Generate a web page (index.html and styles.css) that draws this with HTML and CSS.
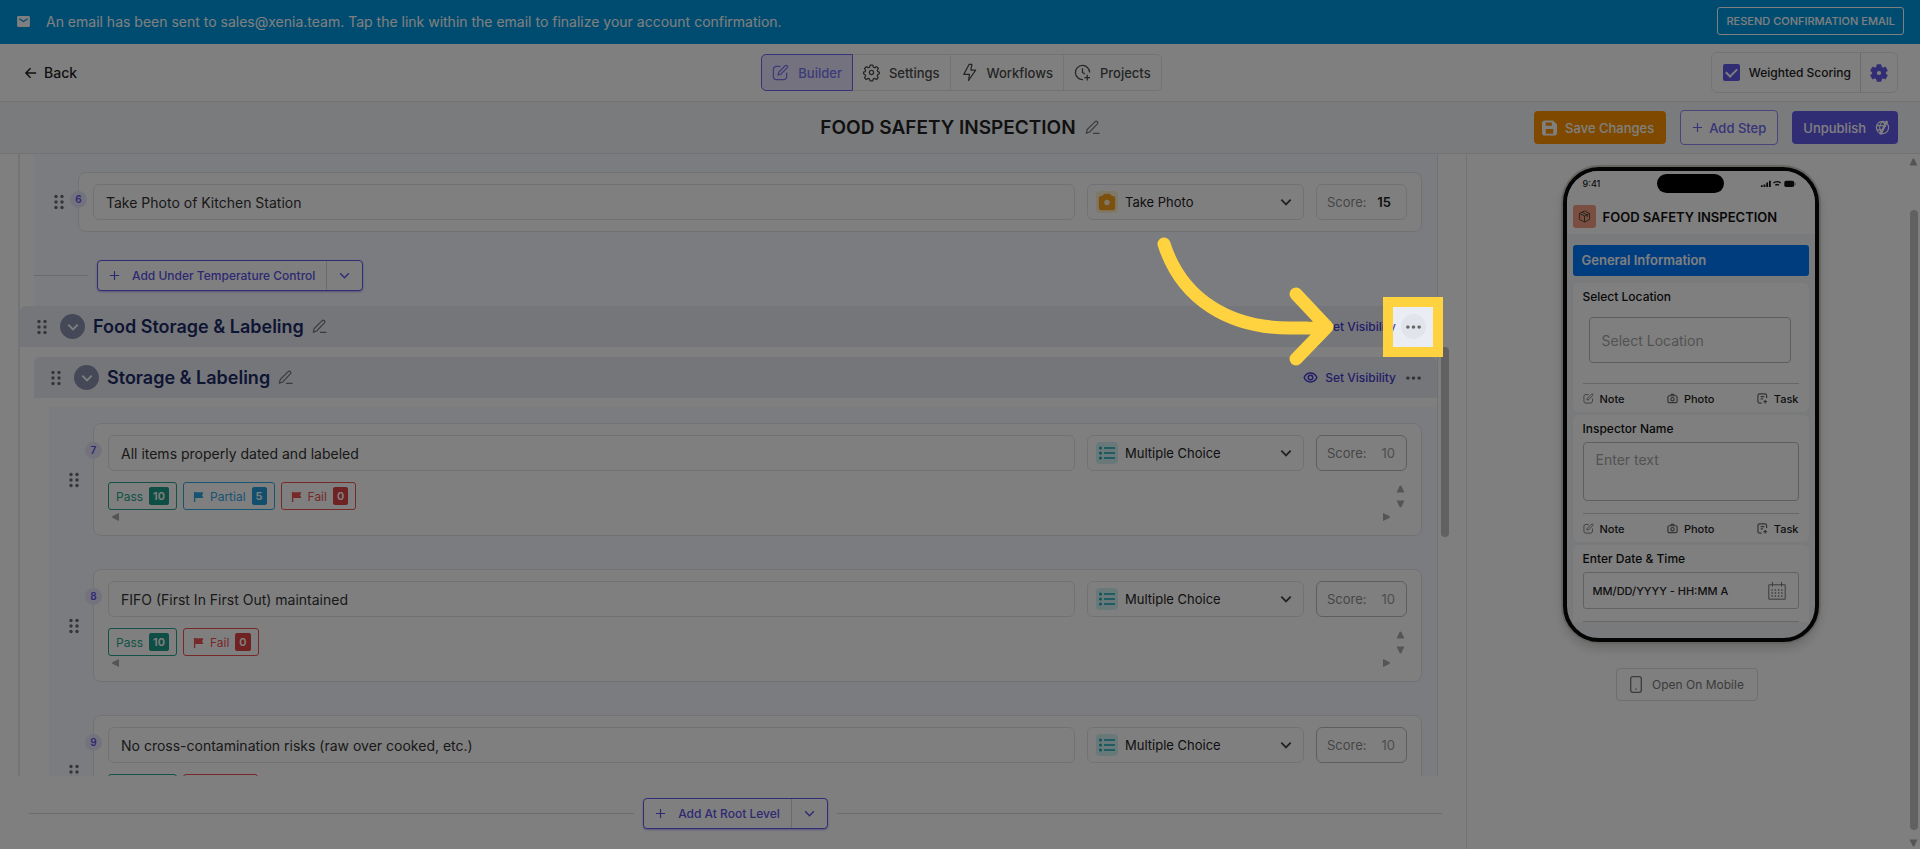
FILE: index.html
```html
<!DOCTYPE html>
<html lang="en">
<head>
<meta charset="utf-8">
<title>Food Safety Inspection</title>
<link rel="stylesheet" href="styles.css">
</head>
<body>
<svg class="defs" aria-hidden="true">
  <symbol id="pen" viewBox="0 0 16 16"><path d="M1.500 14l.8-3.800L10.800 1.800a1.700 1.700 0 0 1 2.400 2.400L5 12.800zM8.500 14.200h7" /></symbol>
  <symbol id="compose" viewBox="0 0 18 18"><path d="M9 2.500H4.500a3 3 0 0 0-3 3v8a3 3 0 0 0 3 3h8a3 3 0 0 0 3-3V9M6.500 11.500l.6-2.800 6.700-6.800a1.500 1.500 0 0 1 2.200 2.200L9.300 10.900z"/></symbol>
  <symbol id="chev" viewBox="0 0 12 12"><path d="M2 4l4 4 4-4"/></symbol>
  <symbol id="plus" viewBox="0 0 12 12"><path d="M6 1v10M1 6h10"/></symbol>
  <symbol id="grip" viewBox="0 0 10 16"><g fill="currentColor" stroke="none"><circle cx="2" cy="2.500" r="1.700"/><circle cx="8" cy="2.500" r="1.700"/><circle cx="2" cy="8" r="1.700"/><circle cx="8" cy="8" r="1.700"/><circle cx="2" cy="13.500" r="1.700"/><circle cx="8" cy="13.500" r="1.700"/></g></symbol>
  <symbol id="dots" viewBox="0 0 16 4"><g fill="currentColor" stroke="none"><circle cx="2" cy="2" r="1.900"/><circle cx="8" cy="2" r="1.900"/><circle cx="14" cy="2" r="1.900"/></g></symbol>
  <symbol id="eye" viewBox="0 0 16 12"><path d="M1 6c3-6.500 11-6.500 14 0-3 6.500-11 6.500-14 0z"/><circle cx="8" cy="6" r="2.500"/></symbol>
  <symbol id="flag" viewBox="0 0 12 12"><path fill="currentColor" stroke="none" d="M1 1h1.500v.4h8.800L10 4.500l1.300 3.200H2.500V12H1z"/></symbol>
  <symbol id="list" viewBox="0 0 22 22"><path d="M8 6h11M8 11h11M8 16h11" stroke-width="1.600"/><g fill="currentColor" stroke="none"><circle cx="4.500" cy="6" r="1.500"/><circle cx="4.500" cy="11" r="1.500"/><circle cx="4.500" cy="16" r="1.500"/></g></symbol>
  <symbol id="up" viewBox="0 0 8 8"><path fill="currentColor" stroke="none" d="M3 1.200a1.200 1.200 0 0 1 2 0L8 7.500H0z"/></symbol>
  <symbol id="cam" viewBox="0 0 12 12"><rect x="1" y="3" width="10" height="7.500" rx="1.500"/><path d="M4 2.800l.7-1.300h2.600L8 2.800"/><circle cx="6" cy="6.700" r="1.800"/></symbol>
  <symbol id="task" viewBox="0 0 12 12"><path d="M5 11H3a2 2 0 0 1-2-2V3a2 2 0 0 1 2-2h5.500a2 2 0 0 1 2 2v2.500M4 4h4M4 6.500h2.500M9 7.500v4M7 9.500h4"/></symbol>
</svg>

<header class="banner">
  <svg class="mail" viewBox="0 0 14 12"><rect width="14" height="12" rx="1.500" fill="#fff"/><path d="M2.500 3L7 6l4.500-3" fill="none" stroke="#0099e2" stroke-width="1.500"/></svg>
  <p>An email has been sent to sales@xenia.team. Tap the link within the email to finalize your account confirmation.</p>
  <button class="resend">RESEND CONFIRMATION EMAIL</button>
</header>

<nav class="topnav">
  <a class="back" href="#"><svg viewBox="0 0 14 14"><path d="M13 7H1.500M6.500 1.500L1 7l5.500 5.500"/></svg>Back</a>
  <div class="tabs">
    <button class="tab active"><svg viewBox="0 0 18 18"><use href="#compose"/></svg>Builder</button>
    <button class="tab"><svg viewBox="0 0 18 18"><circle cx="9" cy="9" r="2.200"/><path stroke-linejoin="round" d="M7.600 1.200h2.800l.5 2.100 1.500.7 2-1.200 1.900 2-1.200 1.900.5 1.300 1.700.6v1.800l-1.800.9-.5 1.200 1.100 2-1.900 1.900-2-1.200-1.300.6-.7 2H7.500l-.7-2-1.300-.6-2 1.200-1.900-1.900 1.200-2-.5-1.200-1.700-.9V8.600l1.700-.6.5-1.300-1.200-1.900 2-2 2 1.200 1.400-.7z"/></svg>Settings</button>
    <button class="tab"><svg viewBox="0 0 18 18"><path stroke-linejoin="round" d="M8.500.5h3l-1 6h5L8 17.500l1-6.500H3z"/></svg>Workflows</button>
    <button class="tab"><svg viewBox="0 0 18 18"><path d="M16.500 9A7.500 7.500 0 1 0 9.500 16.500M9 4.500V9l2.500 1.500M14 11.500v6M11 14.500h6"/></svg>Projects</button>
  </div>
  <div class="scoring">
    <label><input type="checkbox" checked>Weighted Scoring</label>
    <button aria-label="Scoring settings"><svg viewBox="0 0 20 20"><path fill="currentColor" stroke="currentColor" stroke-linejoin="round" fill-rule="evenodd" d="M8 1h4l.6 2.700 1.700 1 2.700-.9 2 3.400L17 9v2l2 1.800-2 3.400-2.700-.9-1.700 1L12 19H8l-.6-2.700-1.700-1-2.700.9-2-3.400L3 11V9L1 7.200l2-3.400 2.700.9 1.700-1zM10 7a3 3 0 1 0 0 6 3 3 0 0 0 0-6z"/></svg></button>
  </div>
</nav>

<div class="titlebar">
  <div class="title"><h1>FOOD SAFETY INSPECTION</h1><button class="pen" aria-label="Rename"><svg viewBox="0 0 16 16"><use href="#pen"/></svg></button></div>
  <div class="actions">
    <button class="btn save"><svg viewBox="0 0 16 16"><path fill="#fff" fill-rule="evenodd" d="M3 0h8.500L16 4v9a3 3 0 0 1-3 3H3a3 3 0 0 1-3-3V3a3 3 0 0 1 3-3zM4 2v3.500h6.500V2zM4 9v5h8V9z"/></svg>Save Changes</button>
    <button class="btn add"><svg viewBox="0 0 12 12"><use href="#plus"/></svg>Add Step</button>
    <button class="btn unpub">Unpublish<svg viewBox="0 0 16 16"><circle cx="8" cy="8" r="6.500"/><path d="M8 1.500c-4 4-4 9 0 13M2 6h8M2 10.500h5M8 1.500c2 1.500 3 4 3 6"/><path d="M13 1L5.500 15.500" stroke-width="2.600"/></svg></button>
  </div>
</div>

<main class="main">
  <section class="editor">
    <div class="viewport">
      <div class="tree">
        <div class="block first">
          <div class="row">
            <svg class="grip" viewBox="0 0 10 16"><use href="#grip"/></svg>
            <article class="card">
              <span class="num">6</span>
              <div class="fields">
                <input class="field" type="text" aria-label="Step 6" value="Take Photo of Kitchen Station">
                <div class="type"><svg class="photo" viewBox="0 0 22 22"><path fill="#f9a11b" fill-rule="evenodd" d="M8 2h6l2.500 2.500h1A2.500 2.500 0 0 1 20 7v10a3 3 0 0 1-3 3H5a3 3 0 0 1-3-3V7a2.500 2.500 0 0 1 2.500-2.500h1zM11 8.500a3 3 0 1 0 0 6 3 3 0 0 0 0-6z"/></svg><select aria-label="Type of step 6"><option>Take Photo</option></select><svg class="chev" viewBox="0 0 12 12"><use href="#chev"/></svg></div>
                <label class="score set">Score:<input type="text" value="15"></label>
              </div>
            </article>
          </div>
          <div class="addrow"><span class="stub"></span>
            <div class="split"><button><svg viewBox="0 0 12 12"><use href="#plus"/></svg>Add Under Temperature Control</button><button class="more" aria-label="More"><svg viewBox="0 0 12 12"><use href="#chev"/></svg></button></div>
          </div>
        </div>

        <div class="head">
          <svg class="grip" viewBox="0 0 10 16"><use href="#grip"/></svg>
          <button class="fold" aria-label="Collapse"><svg viewBox="0 0 12 12"><use href="#chev"/></svg></button>
          <h2>Food Storage &amp; Labeling</h2>
          <button class="pen" aria-label="Rename"><svg viewBox="0 0 16 16"><use href="#pen"/></svg></button>
          <button class="vis"><svg viewBox="0 0 16 12"><use href="#eye"/></svg>Set Visibility</button>
          <button class="dots hover" aria-label="More options"><svg viewBox="0 0 16 4"><use href="#dots"/></svg></button>
        </div>
        <div class="head nested">
          <svg class="grip" viewBox="0 0 10 16"><use href="#grip"/></svg>
          <button class="fold" aria-label="Collapse"><svg viewBox="0 0 12 12"><use href="#chev"/></svg></button>
          <h2>Storage &amp; Labeling</h2>
          <button class="pen" aria-label="Rename"><svg viewBox="0 0 16 16"><use href="#pen"/></svg></button>
          <button class="vis"><svg viewBox="0 0 16 12"><use href="#eye"/></svg>Set Visibility</button>
          <button class="dots" aria-label="More options"><svg viewBox="0 0 16 4"><use href="#dots"/></svg></button>
        </div>

        <div class="block second">
          <div class="row">
            <svg class="grip" viewBox="0 0 10 16"><use href="#grip"/></svg>
            <article class="card">
              <span class="num">7</span>
              <div class="fields">
                <input class="field" type="text" aria-label="Step 7" value="All items properly dated and labeled">
                <div class="type"><svg class="list" viewBox="0 0 22 22"><use href="#list"/></svg><select aria-label="Type of step 7"><option>Multiple Choice</option></select><svg class="chev" viewBox="0 0 12 12"><use href="#chev"/></svg></div>
                <label class="score">Score:<input type="text" value="10"></label>
              </div>
              <div class="answers">
                <div class="chips">
                  <span class="chip pass">Pass<b>10</b></span>
                  <span class="chip part"><svg viewBox="0 0 12 12"><use href="#flag"/></svg>Partial<b>5</b></span>
                  <span class="chip fail"><svg viewBox="0 0 12 12"><use href="#flag"/></svg>Fail<b>0</b></span>
                </div>
                <div class="vbar"><svg viewBox="0 0 8 8"><use href="#up"/></svg><svg class="down" viewBox="0 0 8 8"><use href="#up"/></svg></div>
                <div class="hbar"><svg class="left" viewBox="0 0 8 8"><use href="#up"/></svg><svg class="right" viewBox="0 0 8 8"><use href="#up"/></svg></div>
              </div>
            </article>
          </div>
          <div class="row">
            <svg class="grip" viewBox="0 0 10 16"><use href="#grip"/></svg>
            <article class="card">
              <span class="num">8</span>
              <div class="fields">
                <input class="field" type="text" aria-label="Step 8" value="FIFO (First In First Out) maintained">
                <div class="type"><svg class="list" viewBox="0 0 22 22"><use href="#list"/></svg><select aria-label="Type of step 8"><option>Multiple Choice</option></select><svg class="chev" viewBox="0 0 12 12"><use href="#chev"/></svg></div>
                <label class="score">Score:<input type="text" value="10"></label>
              </div>
              <div class="answers">
                <div class="chips">
                  <span class="chip pass">Pass<b>10</b></span>
                  <span class="chip fail"><svg viewBox="0 0 12 12"><use href="#flag"/></svg>Fail<b>0</b></span>
                </div>
                <div class="vbar"><svg viewBox="0 0 8 8"><use href="#up"/></svg><svg class="down" viewBox="0 0 8 8"><use href="#up"/></svg></div>
                <div class="hbar"><svg class="left" viewBox="0 0 8 8"><use href="#up"/></svg><svg class="right" viewBox="0 0 8 8"><use href="#up"/></svg></div>
              </div>
            </article>
          </div>
          <div class="row">
            <svg class="grip" viewBox="0 0 10 16"><use href="#grip"/></svg>
            <article class="card">
              <span class="num">9</span>
              <div class="fields">
                <input class="field" type="text" aria-label="Step 9" value="No cross-contamination risks (raw over cooked, etc.)">
                <div class="type"><svg class="list" viewBox="0 0 22 22"><use href="#list"/></svg><select aria-label="Type of step 9"><option>Multiple Choice</option></select><svg class="chev" viewBox="0 0 12 12"><use href="#chev"/></svg></div>
                <label class="score">Score:<input type="text" value="10"></label>
              </div>
              <div class="answers">
                <div class="chips">
                  <span class="chip pass"></span>
                  <span class="chip fail"></span>
                </div>
              </div>
            </article>
          </div>
        </div>
      </div>
      <div class="scrollbar inner"><span class="thumb"></span><svg class="down" viewBox="0 0 8 8"><use href="#up"/></svg></div>
    </div>
    <footer class="rootadd">
      <span class="line"></span>
      <div class="split"><button><svg viewBox="0 0 12 12"><use href="#plus"/></svg>Add At Root Level</button><button class="more" aria-label="More"><svg viewBox="0 0 12 12"><use href="#chev"/></svg></button></div>
      <span class="line"></span>
    </footer>
  </section>

  <aside class="preview">
    <div class="stage">
      <div class="phone">
        <div class="status"><span>9:41</span><span class="notch"></span>
          <svg viewBox="0 0 40 10"><path d="M1 9V7h2v2zM4 9V6h2v3zM7 9V4h2v5zM10 9V2h2v7z" fill="#111"/><path d="M15 4.500a6 6 0 0 1 8 0M17 7a3 3 0 0 1 4 0" fill="none" stroke="#111" stroke-width="1.600"/><rect x="27" y="2" width="11" height="7" rx="2" fill="#111"/><rect x="38.500" y="4" width="1" height="3" fill="#888"/></svg>
        </div>
        <div class="apphead"><span class="logo"><svg viewBox="0 0 14 14"><path d="M7 1l5.500 2.800v6.400L7 13l-5.500-2.800V3.800zM1.500 3.800L7 6.500l5.500-2.700M7 6.500V13M4.200 2.400l5.600 2.800v2.300"/></svg></span><strong>FOOD SAFETY INSPECTION</strong></div>
        <div class="form">
          <h3>General Information</h3>
          <div class="q">
            <label for="loc">Select Location</label>
            <input id="loc" class="loc" type="text" placeholder="Select Location">
            <div class="tools"><button><svg viewBox="0 0 18 18"><use href="#compose"/></svg>Note</button><button><svg viewBox="0 0 12 12"><use href="#cam"/></svg>Photo</button><button><svg viewBox="0 0 12 12"><use href="#task"/></svg>Task</button></div>
          </div>
          <div class="q">
            <label for="name">Inspector Name</label>
            <textarea id="name" placeholder="Enter text"></textarea>
            <div class="tools"><button><svg viewBox="0 0 18 18"><use href="#compose"/></svg>Note</button><button><svg viewBox="0 0 12 12"><use href="#cam"/></svg>Photo</button><button><svg viewBox="0 0 12 12"><use href="#task"/></svg>Task</button></div>
          </div>
          <div class="q last">
            <label for="date">Enter Date &amp; Time</label>
            <div class="date"><input id="date" type="text" value="MM/DD/YYYY - HH:MM A"><svg viewBox="0 0 18 18"><path d="M.8 2.800h16.400v14.400H.8zM4.500 0v4.500M13.500 0v4.500"/><path d="M3.500 8h11M3.500 11h11M3.500 14h11" stroke-width="1.400" stroke-dasharray="1.400 1.800"/></svg></div>
            <div class="rule"></div>
          </div>
        </div>
      </div>
      <button class="mobile"><svg viewBox="0 0 12 17"><rect x=".7" y=".7" width="10.600" height="15.600" rx="2"/><path d="M6 12.500v1.200"/></svg>Open On Mobile</button>
    </div>
    <div class="scrollbar outer"><svg viewBox="0 0 8 8"><use href="#up"/></svg><span class="thumb"></span><svg class="down" viewBox="0 0 8 8"><use href="#up"/></svg></div>
  </aside>
</main>

<div class="spotlight"></div>
<svg class="pointer" viewBox="0 0 186 130"><path d="M14 14C32 70 80 98 140 98H176M146 64L177 97L146 129"/></svg>
</body>
</html>
```

FILE: styles.css
```css
*{box-sizing:border-box}
body{margin:0;height:100vh;overflow:hidden;position:relative;display:flex;flex-direction:column;background:#fff;color:#222;font-family:Inter,"Open Sans",sans-serif;font-size:14px}
button,input,select,textarea{font:inherit;color:inherit;margin:0}
button{background:none;border:0;padding:0;display:flex;align-items:center;white-space:nowrap}
h1,h2,h3,p{margin:0}
svg{display:block;flex:none;fill:none;stroke:currentColor;stroke-width:1.300;overflow:visible}
.defs{position:absolute;width:0;height:0}

.banner{flex:none;height:44px;padding:0 16px 2px 17px;display:flex;align-items:center;gap:16px;background:#0099e2;color:#fff}
.banner p{flex:1;font-size:14px}
.mail{width:13px;height:11px;stroke:none}
.resend{height:28px;padding:0 8px;border:1px solid #fff;border-radius:3px;font-size:11px;font-weight:500}

.topnav{flex:none;height:58px;padding:0 22px 0 25px;display:grid;grid-template-columns:1fr auto 1fr;align-items:center;border-bottom:1px solid #e2e4e8}
.back{display:flex;align-items:center;gap:7px;color:#222;text-decoration:none;font-size:14px;font-weight:500}
.back svg{width:12px;height:12px;stroke-width:1.700}
.tabs{display:flex;height:37px;border:1px solid #e6e6e6;border-radius:5px}
.tab{gap:9px;padding:0 10px;border-right:1px solid #e6e6e6;color:#4a4a4a;font-size:13px;font-weight:500}
.tab:last-child{border:0}
.tab svg{width:17px;height:17px}
.tab.active{margin:-1px 0 -1px -1px;border:1px solid #6d66f0;border-radius:5px 0 0 5px;background:#e6e5fc;color:#7a74f5}
.scoring{justify-self:end;display:flex;height:41px;border:1px solid #e6e6e6;border-radius:6px}
.scoring label{display:flex;align-items:center;gap:9px;padding:0 9px 0 11px;font-size:12px;font-weight:500;border-right:1px solid #d8d8d8}
.scoring input{appearance:none;width:17px;height:17px;border-radius:2px;background:#635bea;display:grid;place-items:center}
.scoring input::after{content:"";width:9px;height:5px;border-left:2px solid #fff;border-bottom:2px solid #fff;transform:translateY(-1px) rotate(-45deg)}
.scoring button{padding:0 9px;color:#635bea}
.scoring svg{width:18px;height:18px}

.titlebar{flex:none;height:52px;padding:0 22px;display:grid;grid-template-columns:1fr auto 1fr;align-items:center;background:#f5f7fa;border-bottom:1px solid #e2e4e8}
.title{grid-column:2;display:flex;align-items:center;gap:9px}
.title h1{font-size:19px;font-weight:600;line-height:26px}
.pen{color:#777}
.pen svg{width:15px;height:15px}
.actions{justify-self:end;display:flex;align-items:center;gap:14px}
.btn{height:33px;border-radius:4px;padding:0 11px;font-size:13px;font-weight:500}
.save{background:#ff9400;color:#fff;padding:0 12px 0 8px;gap:8px}
.save svg{width:15px;height:16px;stroke:none}
.add{height:35px;border:1px solid #8f89f5;background:#fff;color:#6d66f0;gap:6px}
.add svg{width:11px;height:11px}
.unpub{background:#635bea;color:#fff;gap:9px;padding:0 8px 0 11px}
.unpub svg{width:15px;height:15px}

.main{flex:1;min-height:0;display:grid;grid-template-columns:minmax(0,1fr) 453px}
.editor{display:flex;flex-direction:column;min-height:0;border-right:1px solid #e6e6e6}
.viewport{flex:1;min-height:0;overflow:hidden;display:grid;grid-template-columns:minmax(0,1fr) 28px}
.tree{margin-left:18px;border-left:2px solid #e8e8ec;border-right:1px solid #e2e2e8}
.block{background:#f6f8ff;display:flex;flex-direction:column;padding-right:15px}
.first{margin-left:14px;height:152px;padding-top:18px}
.second{margin:9px 0 0 29px;padding-top:16px;gap:33px}
.row{display:grid;grid-template-columns:44px minmax(0,1fr);align-items:center}
.grip{width:10px;height:16px;color:#6c6c70}
.row .grip{margin-left:20px}
.card{position:relative;background:#fff;border:1px solid #e4e4e8;border-radius:8px;padding:11px 14px}
.second .card{height:113px}
.num{position:absolute;left:-9px;top:18px;width:17px;height:17px;border-radius:50%;background:#e8e6fb;color:#5a50e8;font-size:10px;font-weight:600;line-height:17px;text-align:center}
.fields{display:grid;grid-template-columns:minmax(0,1fr) 217px 91px;gap:12px;height:36px}
.field,.type,.score{height:36px;border:1px solid #e4e4e8;border-radius:6px;background:#fff}
.field{width:100%;padding:0 12px;color:#333}
.type{display:flex;align-items:center;gap:7px;padding:0 10px 0 8px;font-size:13px}
.type select{flex:1;min-width:0;appearance:none;border:0;background:none;padding:0;color:#222}
.type svg{width:22px;height:22px;border-radius:4px}
.type .photo{padding:1px;background:#fff1cf;stroke:none}
.type .list{background:#d3f2f5;color:#17a7b8}
.type .chev{width:14px;height:14px;color:#444;stroke-width:1.600}
.score{display:flex;align-items:center;justify-content:space-between;padding:0 11px 0 10px;font-size:13px;color:#8c8c8c;border-color:#bcbcbc}
.score input{width:20px;padding:0;border:0;background:none;text-align:right;color:#9c9c9c}
.score.set{border-color:#e4e4e8;padding-right:15px}
.score.set input{color:#222;font-weight:600}
.answers{display:grid;grid-template-columns:minmax(0,1fr) 13px;margin-top:11px;color:#aaa}
.chips{display:flex;gap:6px}
.chip{display:flex;align-items:center;gap:6px;min-width:69px;height:28px;padding:0 7px;border:1px solid;border-radius:3px;font-size:12px}
.chip svg{width:11px;height:11px;margin-left:2px}
.chip b{padding:0 4px;min-width:15px;height:18px;line-height:18px;border-radius:2px;color:#fff;font-size:11px;font-weight:600}
.pass{color:#26a58e}.pass b{background:#1f9d88}
.part{color:#2fa8e6}.part b{background:#259fdd}
.fail{min-width:75px;color:#ee5252}.fail b{background:#e04444}
.vbar{display:flex;flex-direction:column;justify-content:space-between;align-items:center;padding:3px 0 2px}
.vbar svg,.hbar svg{width:9px;height:8px}
.hbar{display:flex;justify-content:space-between;padding:3px 3px}
.down{transform:rotate(180deg)}
.left{transform:rotate(-90deg)}
.right{transform:rotate(90deg)}
.addrow{display:flex;align-items:center;gap:9px;margin-top:28px}
.stub{width:54px;height:1px;background:#d4d6de}
.split{display:flex;height:31px;border:1px solid #635bea;border-radius:4px;background:#fff;color:#5c53e6;font-size:12px;font-weight:500;box-shadow:0 1px 2px #635bea80}
.split button{gap:12px;padding:0 11px}
.split svg{width:11px;height:11px}
.split .more{border-left:1px solid #d4d4e0}
.split .more svg{width:13px;height:13px}

.head{height:41px;display:flex;align-items:center;padding:0 11px 0 17px;background:#ebedf5;border-radius:6px 6px 0 0}
.nested{margin:10px 0 0 14px}
.fold{width:25px;height:25px;margin:0 8px 0 13px;border-radius:50%;background:#8b91ad;color:#fff;justify-content:center}
.fold svg{width:14px;height:14px;stroke-width:1.600}
.head h2{margin-right:8px;font-size:18px;font-weight:600;color:#1c2b66}
.vis{margin-left:auto;gap:7px;color:#463bcf;font-size:12px;font-weight:500}
.vis svg{width:15px;height:11px;stroke-width:1.600}
.dots{width:25px;height:25px;margin-left:5px;border-radius:50%;justify-content:center;color:#666}
.dots svg{width:15px;height:4px}
.dots.hover{background:#e2e4ec}

.scrollbar{display:flex;flex-direction:column;align-items:center;color:#aaa}
.scrollbar svg{width:9px;height:8px}
.thumb{width:8px;border-radius:4px;background:#c2c2c2}
.inner{width:14px;padding:193px 0 2px}
.inner .thumb{height:190px}
.inner .down{margin-top:auto}
.outer{width:13px;padding:4px 0 2px}
.outer .thumb{flex:1;margin:44px 0 9px}

.rootadd{flex:none;height:73px;display:flex;align-items:center;gap:9px;padding:2px 24px 0 29px}
.line{flex:1;height:1px;background:#d8d8d8}

.preview{display:flex;min-height:0}
.stage{flex:1;display:flex;flex-direction:column;align-items:center;padding-top:13px}
.phone{width:256px;margin-left:7px;border:4px solid #080808;border-radius:36px;background:#f1f4f9;overflow:hidden;box-shadow:0 0 0 2px #cfccc6,0 6px 12px #0000002e}
.status{display:grid;grid-template-columns:1fr auto 1fr;align-items:center;height:28px;padding:0 17px 4px 16px;background:#fff;font-size:9px;font-weight:500}
.status svg{justify-self:end;width:40px;height:9px;stroke:none}
.notch{width:67px;height:19px;border-radius:10px;background:#000}
.apphead{display:flex;align-items:center;gap:7px;height:35px;padding:0 6px;background:#fff;font-size:13px;color:#111}
.apphead strong{font-weight:600;white-space:nowrap}
.logo{width:23px;height:23px;border-radius:3px;background:#f59f82;display:grid;place-items:center;color:#443}
.logo svg{width:13px;height:13px;stroke-width:1}
.form{padding:11px 6px 16px;display:flex;flex-direction:column;gap:3px}
.form h3{height:31px;line-height:31px;margin-bottom:4px;padding:0 9px;border-radius:3px;background:#007bff;color:#fff;font-size:13px;font-weight:600}
.q{padding:6px 10px 5px;background:#fff;border-radius:6px;display:flex;flex-direction:column}
.q label{font-size:12px;line-height:15px;font-weight:500;color:#111}
.q input,.q textarea{border:1px solid #bdbdbd;border-radius:4px;background:#fff;font-size:14px}
.q ::placeholder{color:#a5a5a5;opacity:1}
.q .loc{height:46px;margin:13px 8px 20px 6px;padding:0 12px}
.q textarea{height:59px;margin:6px 0 12px;padding:8px 12px;resize:none;overflow:hidden}
.tools{display:flex;justify-content:space-between;border-top:1px solid #cfcfcf;padding-top:6px;height:24px;font-size:11px;font-weight:500;color:#222}
.tools button{gap:6px;height:17px}
.tools svg{width:11px;height:11px;color:#666}
.last{padding-bottom:0;border-radius:6px 6px 0 0}
.date{display:flex;align-items:center;height:37px;margin:6px 0 12px;border:1px solid #c4c4c4;border-radius:3px;padding:0 12px 0 9px}
.q .date input{flex:1;min-width:0;border:0;padding:0;font-size:11px;font-weight:500}
.date svg{width:18px;height:18px;color:#777;stroke-width:1}
.rule{height:1px;background:#cfcfcf}
.mobile{margin-top:26px;height:33px;padding:0 13px;gap:10px;border:1px solid #dcdcdc;border-radius:4px;color:#777;font-size:12px}
.mobile svg{width:12px;height:17px}

.spotlight{position:absolute;right:477px;top:297px;width:60px;height:60px;border:10px solid #ffd23f;box-shadow:0 0 0 3000px #00000080;z-index:5}
.pointer{position:absolute;right:584px;top:230px;width:186px;height:130px;z-index:6;stroke:#ffd23f;stroke-width:13;stroke-linecap:round;stroke-linejoin:round}
```
